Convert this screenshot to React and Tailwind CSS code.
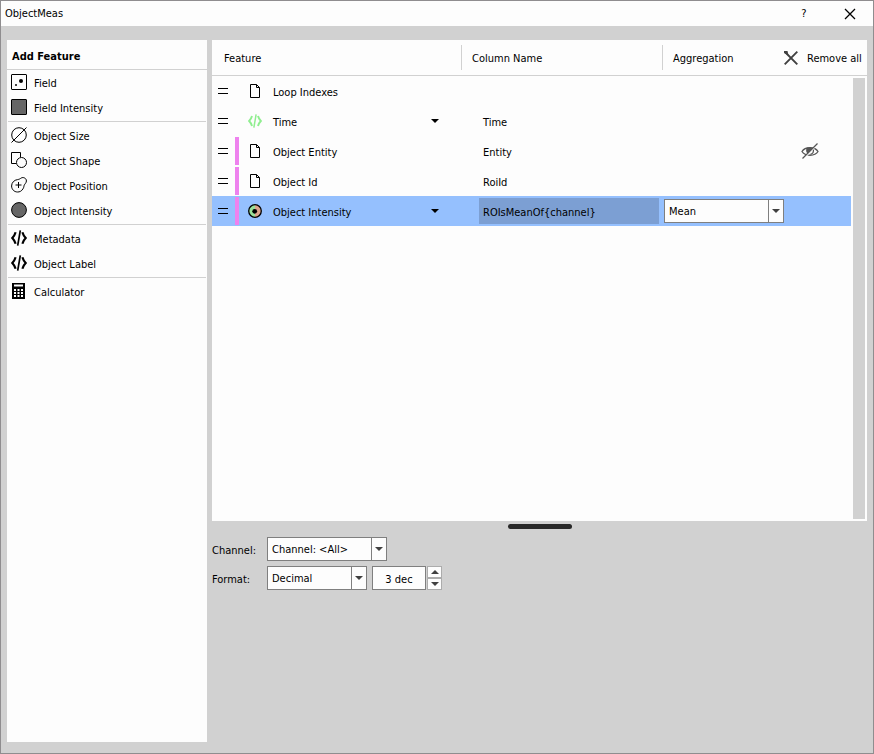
import React from "react";

const stroke = { fill: "none", stroke: "#000", strokeWidth: 1 };

function FieldIcon() {
  return (
    <svg width="16" height="16" viewBox="0 0 16 16" aria-hidden="true">
      <rect x="0.5" y="0.5" width="15" height="15" rx="0.5" {...stroke} />
      <circle cx="10" cy="7" r="2" />
      <rect x="4" y="10" width="2" height="2" fill="#444" />
    </svg>
  );
}

function FieldIntensityIcon() {
  return (
    <svg width="16" height="16" viewBox="0 0 16 16" aria-hidden="true">
      <rect x="0.5" y="0.5" width="15" height="15" rx="0.5" fill="#666" stroke="#000" />
    </svg>
  );
}

function SizeIcon() {
  return (
    <svg width="16" height="16" viewBox="0 0 16 16" aria-hidden="true">
      <circle cx="8" cy="8" r="7.3" {...stroke} />
      <path d="M0.5 15.5 15.5 0.5" {...stroke} />
    </svg>
  );
}

function ShapeIcon() {
  return (
    <svg width="16" height="16" viewBox="0 0 16 16" aria-hidden="true">
      <path d="M5 11.5H0.5V0.5H9.5V5" {...stroke} />
      <circle cx="10.5" cy="10.5" r="5" {...stroke} />
    </svg>
  );
}

function PositionIcon() {
  return (
    <svg width="16" height="16" viewBox="0 0 16 16" aria-hidden="true">
      <path
        d="M6.5 2.6C8.5 2.3 9 1.8 10.2 1C12.3 -0.2 15.5 1.2 15.4 4C15.3 6 13.8 6.8 13.2 8.2C12.8 9.4 13 10.2 12 11.8C10.5 14.3 8.6 15 6.6 15C3 15 0.6 12.2 0.6 9C0.6 5.6 3.2 3 6.5 2.6Z"
        {...stroke}
      />
      <path d="M7.5 5V11M4.5 8H10.5" {...stroke} />
    </svg>
  );
}

function IntensityIcon() {
  return (
    <svg width="16" height="16" viewBox="0 0 16 16" aria-hidden="true">
      <circle cx="8" cy="8" r="7.4" fill="#666" stroke="#000" />
    </svg>
  );
}

function CodeIcon({ size = 16, color = "#000" }) {
  return (
    <svg width={size} height={size} viewBox="0 0 16 16" aria-hidden="true">
      <path
        d="M4.600 2.200C3.800 4.800 2.600 6.700 1.300 8C2.600 9.300 3.800 11.200 4.600 13.800M11.400 2.200C12.200 4.800 13.400 6.700 14.700 8C13.400 9.300 12.200 11.200 11.400 13.800"
        fill="none"
        stroke={color}
        strokeWidth="2.200"
      />
      <path d="M9.300 0.300 6.700 15.700" fill="none" stroke={color} strokeWidth="1.700" />
    </svg>
  );
}

function CalculatorIcon() {
  return (
    <svg width="16" height="16" viewBox="0 0 16 16" aria-hidden="true">
      <rect x="1" y="0" width="13" height="16" />
      <path
        d="M3 1.500H12V3.500H3ZM3 6h2v2h-2zM6.500 6h2v2h-2zM10 6h2v2h-2zM3 9h2v2h-2zM6.500 9h2v2h-2zM10 9h2v2h-2zM3 12h2v2h-2zM6.500 12h2v2h-2zM10 12h2v2h-2z"
        fill="#fdfdfd"
      />
    </svg>
  );
}

function DocumentIcon() {
  return (
    <svg width="14" height="14" viewBox="0 0 14 14" aria-hidden="true">
      <path d="M2.500 0.500H8.500L11.500 3.500V13.500H2.500ZM8.500 0.500V3.500H11.500" {...stroke} />
    </svg>
  );
}

function ChannelIcon() {
  return (
    <svg width="14" height="14" viewBox="0 0 14 14" aria-hidden="true">
      <path d="M7 0.700A6.300 6.300 0 0 0 7 13.300Z" fill="#98e098" />
      <path d="M7 0.700A6.300 6.300 0 0 1 7 13.300Z" fill="#dda58c" />
      <circle cx="7" cy="7" r="6.300" fill="none" stroke="#000" strokeWidth="1.300" />
      <circle cx="6.700" cy="7.300" r="2.400" />
    </svg>
  );
}

function HiddenIcon() {
  return (
    <svg width="18" height="16" viewBox="0 0 18 16" aria-hidden="true">
      <path d="M1 8.500C4 3.500 14 3.500 17 8.500C14 13.500 4 13.500 1 8.500Z" fill="none" stroke="#555" strokeWidth="1.300" />
      <path d="M5.500 5C4.500 8 5.500 10 7 11L12 5.500C10 4.300 7 4.300 5.500 5Z" fill="#555" />
      <path d="M12.300 6.500C12.800 9 11.500 10.800 9.500 11.300" fill="none" stroke="#555" strokeWidth="1.300" />
      <path d="M2.800 15.500 17.200 0.700" stroke="#fdfdfd" strokeWidth="1.200" />
      <path d="M1.500 15.500 16.500 0.500" stroke="#555" strokeWidth="1.300" />
    </svg>
  );
}

function RemoveIcon() {
  return (
    <svg width="14" height="14" viewBox="0 0 14 14" aria-hidden="true">
      <path d="M1 1 13.300 13.300M13.300 0.700 0.700 13.300" fill="none" stroke="#404040" strokeWidth="1.900" />
      <path d="M0 0H3.500L4.500 4.500L0 2Z" fill="#404040" />
    </svg>
  );
}

function Caret({ color = "#000", up = false }) {
  return (
    <svg width="8" height="4" viewBox="0 0 8 4" aria-hidden="true">
      <path d={up ? "M0 4H8L4 0Z" : "M0 0H8L4 4Z"} fill={color} />
    </svg>
  );
}

const groups = [
  [
    ["Field", FieldIcon],
    ["Field Intensity", FieldIntensityIcon],
  ],
  [
    ["Object Size", SizeIcon],
    ["Object Shape", ShapeIcon],
    ["Object Position", PositionIcon],
    ["Object Intensity", IntensityIcon],
  ],
  [
    ["Metadata", CodeIcon],
    ["Object Label", CodeIcon],
  ],
  [["Calculator", CalculatorIcon]],
];

const rows = [
  { feature: "Loop Indexes", icon: <DocumentIcon /> },
  { feature: "Time", icon: <CodeIcon size={14} color="#90ee90" />, column: "Time", menu: true },
  { feature: "Object Entity", icon: <DocumentIcon />, column: "Entity", object: true, hidden: true },
  { feature: "Object Id", icon: <DocumentIcon />, column: "RoiId", object: true },
  {
    feature: "Object Intensity",
    icon: <ChannelIcon />,
    column: "ROIsMeanOf{channel}",
    object: true,
    menu: true,
    selected: true,
  },
];

function Select({ id, label, value, className }) {
  return (
    <div className={`relative h-6 ${className}`}>
      <select
        id={id}
        aria-label={label}
        defaultValue={value}
        className="block h-full w-full appearance-none border border-[#7f7f7f] bg-[#fdfdfd] pt-px pr-5 pl-1 outline-none"
      >
        <option>{value}</option>
      </select>
      <span className="pointer-events-none absolute inset-y-0 right-0 flex w-4 items-center justify-center border border-[#7f7f7f]">
        <Caret color="#404040" />
      </span>
    </div>
  );
}

function Sidebar() {
  return (
    <aside className="w-[200px] shrink-0 bg-[#fdfdfd]">
      <h2 className="flex h-[30px] items-center border-b border-[#d1d1d1] px-[5px] pt-1 font-bold">Add Feature</h2>
      {groups.map((items, i) => (
        <ul key={i} className={i ? "mx-px mt-px border-t border-[#d1d1d1] pt-px" : "mx-px"}>
          {items.map(([name, Icon]) => (
            <li key={name}>
              <button type="button" className="flex h-[25px] w-full items-start gap-[7px] px-[3px] pt-1 text-left">
                <Icon />
                <span className="leading-5">{name}</span>
              </button>
            </li>
          ))}
        </ul>
      ))}
    </aside>
  );
}

function FeatureRow({ row }) {
  const bg = row.selected ? "bg-[#95c0fe]" : "";
  return (
    <tr className="h-[30px]">
      <td className={`p-0 ${bg}`}>
        <div className="flex h-[30px] items-center">
          <span className="ml-1.5 h-[6px] w-[10px] border-y border-black" />
          <span className={`ml-[7px] h-7 w-1 ${row.object ? "bg-[#ee82ee]" : ""}`} />
          <span className="mr-[11px] ml-[9px]">{row.icon}</span>
          <span className="grow pt-1">{row.feature}</span>
          {row.menu && (
            <button type="button" aria-label={`${row.feature} options`} className="mr-[23px] p-0">
              <Caret />
            </button>
          )}
        </div>
      </td>
      <td className={`p-0 ${bg}`}>
        {row.selected ? (
          <input
            aria-label="Column Name"
            defaultValue={row.column}
            className="ml-[17px] block h-[26px] w-[180px] bg-[#7c9fd3] px-1 pt-0.5 outline-none"
          />
        ) : (
          <div className="pt-1 pl-[21px]">{row.column}</div>
        )}
      </td>
      <td className={`p-0 ${bg}`}>
        {row.selected && <Select label="Aggregation" value="Mean" className="ml-px w-[120px]" />}
      </td>
      <td className={`p-0 ${bg}`}>
        {row.hidden && (
          <button type="button" aria-label="Show column" className="ml-[17px] block">
            <HiddenIcon />
          </button>
        )}
      </td>
      <td className="p-0" />
    </tr>
  );
}

function FeatureTable() {
  return (
    <section className="relative h-[481px] bg-[#fdfdfd]">
      <table className="w-full table-fixed border-separate border-spacing-0 text-left">
        <colgroup>
          <col className="w-[250px]" />
          <col className="w-[201px]" />
          <col className="w-[121px]" />
          <col />
          <col className="w-4" />
        </colgroup>
        <thead>
          <tr className="h-9">
            <th className="border-b border-[#d1d1d1] p-0 font-normal">
              <div className="flex h-[25px] items-center border-r border-[#d1d1d1] pt-0.5 pl-3">Feature</div>
            </th>
            <th className="border-b border-[#d1d1d1] p-0 font-normal">
              <div className="flex h-[25px] items-center border-r border-[#d1d1d1] pt-0.5 pl-2.5">Column Name</div>
            </th>
            <th className="border-b border-[#d1d1d1] p-0 font-normal">
              <div className="flex h-[25px] items-center pt-0.5 pl-2.5">Aggregation</div>
            </th>
            <th colSpan={2} className="border-b border-[#d1d1d1] p-0 font-normal">
              <button type="button" className="flex h-[25px] w-full items-center gap-[9px] whitespace-nowrap">
                <RemoveIcon />
                <span className="pt-0.5">Remove all</span>
              </button>
            </th>
          </tr>
        </thead>
        <tbody>
          {rows.map((row) => (
            <FeatureRow key={row.feature} row={row} />
          ))}
        </tbody>
      </table>
      <div className="absolute top-[38px] right-0.5 bottom-0.5 w-3 bg-[#d1d1d1]" />
    </section>
  );
}

function Settings() {
  return (
    <form className="mt-2 flex flex-col gap-[5px]">
      <div className="flex items-center">
        <label htmlFor="channel" className="w-[55px] pt-1">Channel:</label>
        <Select id="channel" value="Channel: &lt;All&gt;" className="w-[120px]" />
      </div>
      <div className="flex items-center">
        <label htmlFor="format" className="w-[55px] pt-1">Format:</label>
        <Select id="format" value="Decimal" className="w-[100px]" />
        <input
          aria-label="Decimals"
          defaultValue="3 dec"
          className="ml-[5px] h-6 w-[54px] border border-[#7f7f7f] bg-[#fdfdfd] pt-0.5 text-center outline-none"
        />
        <div className="ml-px flex h-6 w-[15px] flex-col">
          <button type="button" aria-label="More decimals" className="flex h-3 items-center justify-center border border-[#acacac] bg-[#fdfdfd]">
            <Caret up color="#404040" />
          </button>
          <button type="button" aria-label="Fewer decimals" className="flex h-3 items-center justify-center border border-[#acacac] bg-[#fdfdfd]">
            <Caret color="#404040" />
          </button>
        </div>
      </div>
    </form>
  );
}

export default function App() {
  return (
    <div className="flex min-h-screen flex-col border border-[#8f8d8f] bg-[#d1d1d1] font-['DejaVu_Sans_Condensed','DejaVu_Sans',sans-serif] text-[11px] leading-4 text-black [font-stretch:condensed]">
      <header className="flex h-[25px] items-center bg-[#fdfdfd] pl-1">
        <h1 className="grow">ObjectMeas</h1>
        <button type="button" className="w-8 text-center">?</button>
        <button type="button" aria-label="Close" className="mr-[15px] ml-[22px] flex w-4 justify-center">
          <svg width="12" height="12" viewBox="0 0 12 12" aria-hidden="true">
            <path d="M1 1 11 11M11 1 1 11" fill="none" stroke="#000" strokeWidth="1.300" />
          </svg>
        </button>
      </header>
      <div className="flex grow gap-[5px] pt-[14px] pr-1.5 pb-[11px] pl-1.5">
        <Sidebar />
        <main className="min-w-0 grow">
          <FeatureTable />
          <div className="mx-auto mt-[3px] h-[5px] w-16 rounded-full bg-[#282828]" />
          <Settings />
        </main>
      </div>
    </div>
  );
}
